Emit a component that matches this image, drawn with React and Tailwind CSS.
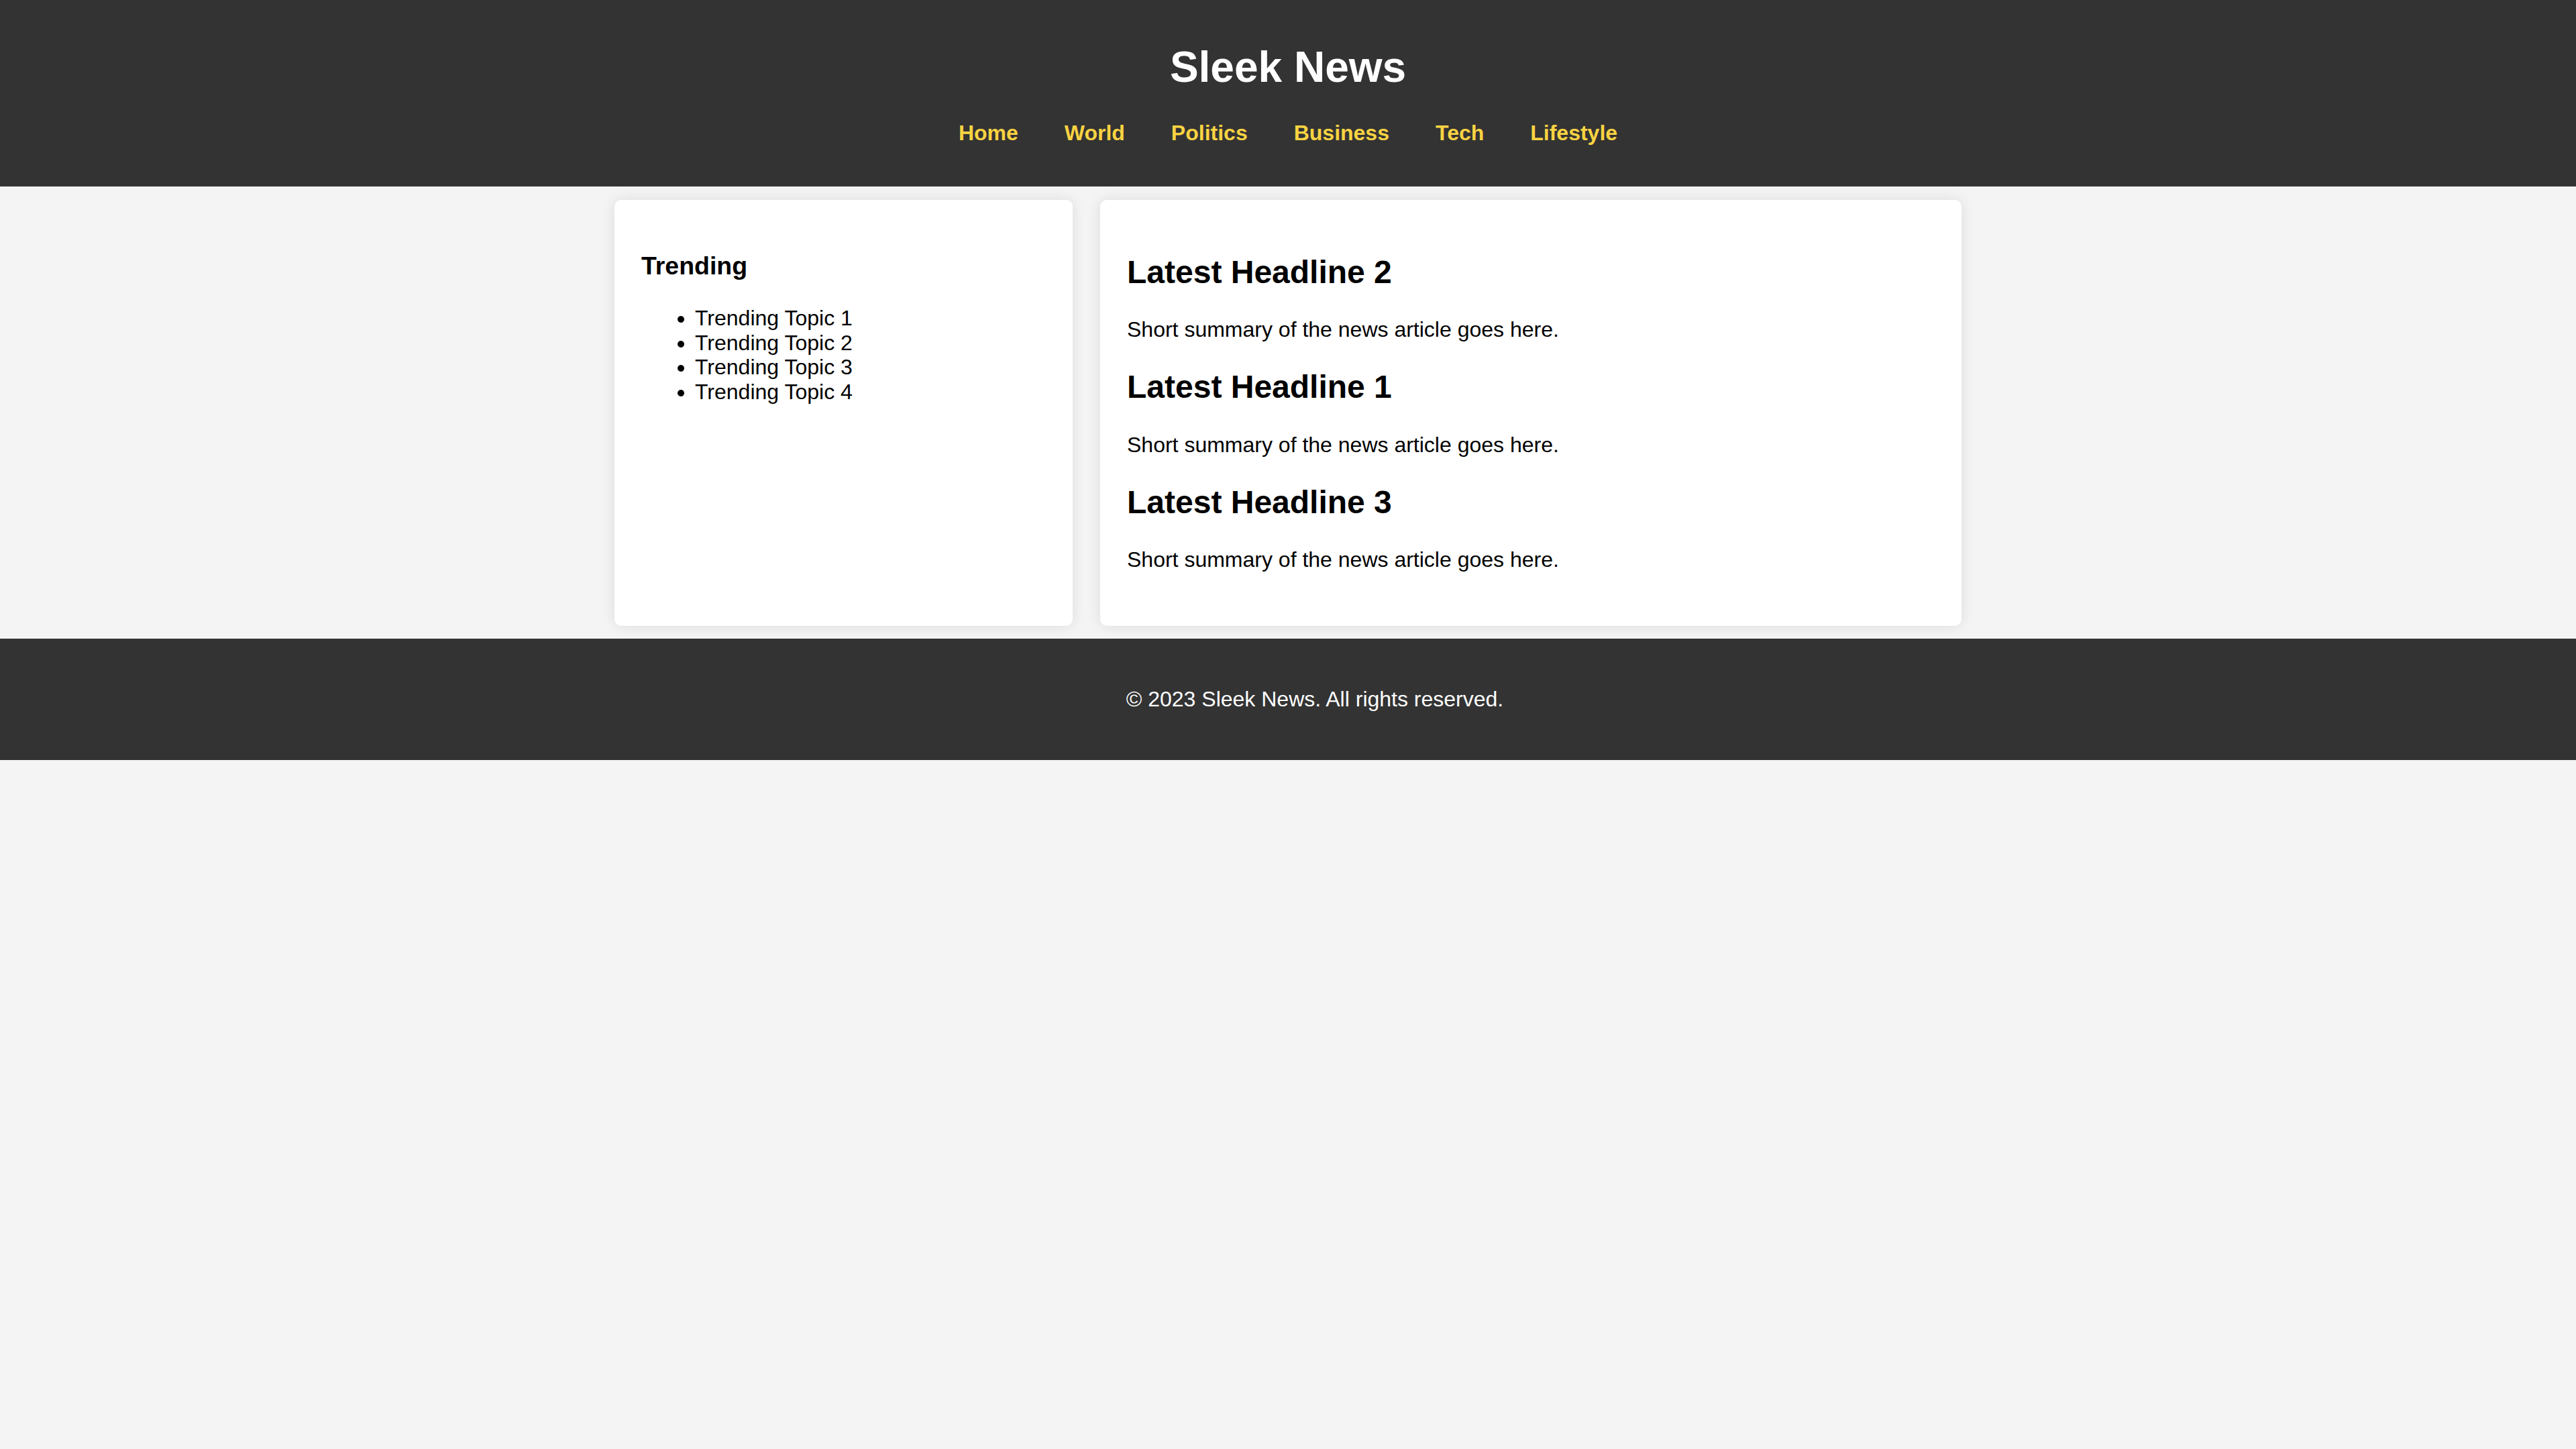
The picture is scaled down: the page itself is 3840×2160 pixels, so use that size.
export default function App() {
  const nav = ["Home", "World", "Politics", "Business", "Tech", "Lifestyle"];
  const topics = ["Trending Topic 1", "Trending Topic 2", "Trending Topic 3", "Trending Topic 4"];
  const news = ["Latest Headline 2", "Latest Headline 1", "Latest Headline 3"];
  return (
    <div className="min-h-screen bg-[#f4f4f4] text-black" style={{ fontFamily: '"Liberation Sans", Arial, sans-serif' }}>
      <header className="bg-[#333333] text-white text-center pt-[20px] pb-[61px]">
        <h1 className="text-[64px] leading-[74px] font-bold mt-[43px] mb-[43px]">Sleek News</h1>
        <nav className="flex justify-center gap-[69px] text-[32px] leading-[37px] font-bold text-[#f9d342]">
          {nav.map((n) => (
            <a key={n} href="#" className="no-underline">{n}</a>
          ))}
        </nav>
      </header>
      <main className="w-[2008px] mx-auto mt-[20px] mb-[19px] flex gap-[41px]">
        <aside className="w-[683px] shrink-0 bg-white rounded-[10px] shadow-[0_0_20px_rgba(0,0,0,0.1)] px-[40px] pt-[40px] pb-[40px]">
          <h3 className="text-[37.44px] leading-[43px] font-bold mt-[37.44px] mb-[37.44px]">Trending</h3>
          <ul className="list-disc pl-[80px] text-[32px] leading-[36.8px]">
            {topics.map((t) => (
              <li key={t}>{t}</li>
            ))}
          </ul>
        </aside>
        <section className="flex-1 bg-white rounded-[10px] shadow-[0_0_20px_rgba(0,0,0,0.1)] px-[40px] pt-[40px] pb-[40px]">
          {news.map((h, i) => (
            <article key={h} className={i === 2 ? "pb-[40px]" : ""}>
              <h2 className="text-[48px] leading-[55.2px] font-bold mt-[39.84px] mb-[39.84px]">{h}</h2>
              <p className="text-[32px] leading-[36.8px]">Short summary of the news article goes here.</p>
            </article>
          ))}
        </section>
      </main>
      <footer className="bg-[#333333] text-white text-center pt-[72px] pb-[72px] pl-[80px] text-[32px] leading-[36.8px]">
        <p>© 2023 Sleek News. All rights reserved.</p>
      </footer>
    </div>
  );
}
